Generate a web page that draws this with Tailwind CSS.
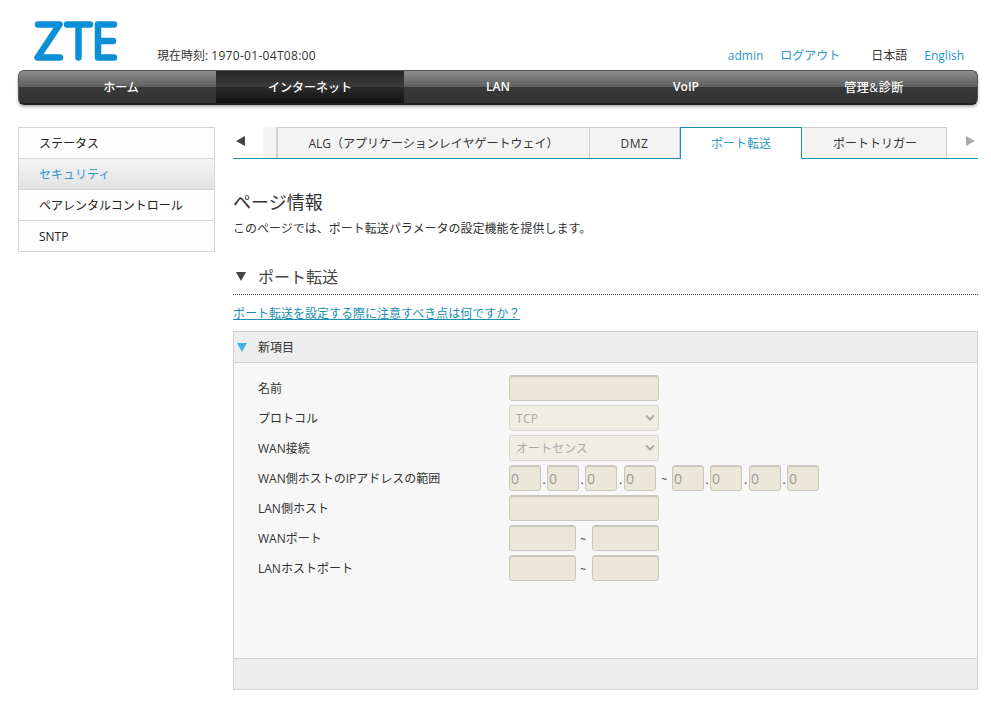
<!DOCTYPE html>
<html lang="ja">
<head>
    <meta charset="UTF-8">
    <title>ZTE</title>
    <script src="https://cdn.jsdelivr.net/npm/@tailwindcss/browser@4"></script>
</head>
<body class="bg-white text-[#333] text-[12px] font-['Open_Sans','Noto_Sans_CJK_JP',sans-serif]">
<div class="w-[991px] h-[706px] overflow-hidden pl-[18px] pr-[13px]">

    <!-- header -->
    <header class="relative h-[70px] flex items-end">
        <svg class="absolute left-[16px] top-[20px]" width="86" height="42" viewBox="0 0 86 42" fill="none" stroke="#0b8fd6" stroke-width="6.5" stroke-linecap="round" stroke-linejoin="round">
            <path d="M4 4.5H25.5L3.5 37.5H26"/>
            <path d="M33 4.5H56M44.5 4.5V37.5"/>
            <path d="M80 4.5H64V37.5H80M64 21H79"/>
        </svg>
        <span class="ml-[139px] mb-[5px] leading-[18px]">現在時刻: <span class="tracking-[0.3px]">1970-01-04T08:00</span></span>
        <div class="ml-auto mr-[14px] mb-[5px] flex leading-[18px]">
            <a class="text-[#2d97c4]">admin</a>
            <a class="ml-[17px] text-[#2d97c4]">ログアウト</a>
            <span class="ml-[31px]">日本語</span>
            <a class="ml-[17px] text-[#1d96cf]">English</a>
        </div>
    </header>

    <!-- main nav -->
    <nav class="w-[960px] h-[35px] px-[9px] flex rounded-[6px] border border-[#555] border-b-2 border-b-[#222] shadow-[0_2px_3px_rgba(0,0,0,0.3)] bg-[linear-gradient(#8c8c8c,#5f5f5f_50%,#383838_50%,#333)] text-white text-[12px] overflow-hidden">
        <a class="w-[188px] pt-[2px] pr-[2px] flex items-center justify-center font-medium">ホーム</a>
        <a class="w-[188px] pt-[2px] flex items-center justify-center font-medium bg-[linear-gradient(#242424,#3c3c3c_50%,#2c2c2c_50%,#111)]">インターネット</a>
        <a class="w-[188px] flex items-center justify-center font-semibold">LAN</a>
        <a class="w-[188px] flex items-center justify-center font-semibold">VoIP</a>
        <a class="w-[188px] pt-[2px] flex items-center justify-center font-medium tracking-[0.6px]">管理&amp;診断</a>
    </nav>

    <div class="flex mt-[22px]">
        <!-- side menu -->
        <ul class="w-[197px] h-[125px] border border-[#d4d4d4] shrink-0">
            <li class="h-[31px] pl-[20px] pt-[2px] flex items-center text-[#222] bg-[#fdfdfd] border-b border-[#d4d4d4]">ステータス</li>
            <li class="h-[31px] pl-[20px] pt-[2px] flex items-center text-[#2d97c4] bg-[linear-gradient(#f4f4f4,#e2e2e2)] border-b border-[#d4d4d4]">セキュリティ</li>
            <li class="h-[31px] pl-[20px] pt-[2px] flex items-center text-[#222] bg-[#fdfdfd] border-b border-[#d4d4d4]">ペアレンタルコントロール</li>
            <li class="h-[30px] pl-[20px] pt-[2px] flex items-center text-[#222] bg-[#fdfdfd]">SNTP</li>
        </ul>

        <main class="ml-[18px] w-[745px]">
            <!-- tabs -->
            <div class="flex h-[32px] border-b border-[#1c8fb0]">
                <div class="w-[43px] flex">
                    <div class="w-[30px] bg-white flex items-center pl-[3px] pb-[3px]">
                        <span class="w-0 h-0 border-y-[5px] border-y-transparent border-r-[9px] border-r-[#444]"></span>
                    </div>
                    <div class="w-[13px] bg-[#f3f3f3]"></div>
                </div>
                <div class="w-[314px] pt-[2px] flex items-center justify-center bg-[#f3f3f3] border-t border-x border-[#d0d0d0] border-l-2">ALG（アプリケーションレイヤゲートウェイ）</div>
                <div class="w-[90px] pt-[2px] flex items-center justify-center tracking-[0.6px] bg-[#f3f3f3] border-t border-r border-[#d0d0d0]">DMZ</div>
                <div class="w-[122px] h-[32px] flex items-center justify-center bg-white text-[#2d97c4] border-t border-x border-[#1c8fb0]">ポート転送</div>
                <div class="w-[145px] pt-[2px] pl-[2px] flex items-center justify-center bg-[#f3f3f3] border-t border-r border-[#d0d0d0]">ポートトリガー</div>
                <div class="w-[31px] flex items-center justify-end pr-[3px] pb-[3px]">
                    <span class="w-0 h-0 border-y-[5px] border-y-transparent border-l-[9px] border-l-[#aaa]"></span>
                </div>
            </div>

            <h1 class="mt-[31px] text-[18px] leading-[24px] text-[#333]">ページ情報</h1>
            <p class="mt-[6px] text-[12px] leading-[18px] text-[#333]">このページでは、ポート転送パラメータの設定機能を提供します。</p>

            <div class="mt-[21px] h-[36px] flex items-center border-b border-dotted border-[#333]">
                <span class="ml-[3px] w-0 h-0 border-x-[5px] border-x-transparent border-t-[9px] border-t-[#444]"></span>
                <h2 class="ml-[12px] text-[16px] text-[#444]">ポート転送</h2>
            </div>

            <a class="block mt-[10px] h-[18px] leading-[17px] text-[#1c8fb0] underline w-[288px]">ポート転送を設定する際に注意すべき点は何ですか？</a>

            <!-- form panel -->
            <section class="mt-[8px] h-[359px] border border-[#d2d2d2] bg-[#f7f7f7] flex flex-col">
                <div class="h-[31px] shrink-0 flex items-center bg-[#ededed] border-b border-[#d2d2d2]">
                    <span class="ml-[3px] w-0 h-0 border-x-[5px] border-x-transparent border-t-[9px] border-t-[#3fb2e0]"></span>
                    <span class="ml-[11px] pt-[2px]">新項目</span>
                </div>

                <div class="flex-1 pt-[12px] pl-[24px] flex flex-col gap-[4px] text-[12px]">
                    <div class="h-[26px] flex items-center">
                        <label class="w-[251px] pt-[2px]">名前</label>
                        <input disabled class="w-[150px] h-[26px] rounded-[3px] border border-[#c8c8c0] shadow-[inset_0_1px_1px_rgba(0,0,0,0.15)] bg-[#ebe8da]">
                    </div>
                    <div class="h-[26px] flex items-center">
                        <label class="w-[251px] pt-[2px]">プロトコル</label>
                        <div class="relative w-[150px] h-[26px] rounded-[3px] border border-[#d5d5cd] bg-[#f0eee3] text-[#aaa] flex items-center pl-[6px] pt-[2px] tracking-[0.3px]">TCP
                            <svg class="absolute right-[3px] top-[8px]" width="10" height="8" viewBox="0 0 10 8" fill="none" stroke="#aaa" stroke-width="2"><path d="M1 1.5L5 5.5L9 1.5"/></svg>
                        </div>
                    </div>
                    <div class="h-[26px] flex items-center">
                        <label class="w-[251px] pt-[2px]">WAN接続</label>
                        <div class="relative w-[150px] h-[26px] rounded-[3px] border border-[#d5d5cd] bg-[#f0eee3] text-[#aaa] flex items-center pl-[6px] pt-[2px]">オートセンス
                            <svg class="absolute right-[3px] top-[8px]" width="10" height="8" viewBox="0 0 10 8" fill="none" stroke="#aaa" stroke-width="2"><path d="M1 1.5L5 5.5L9 1.5"/></svg>
                        </div>
                    </div>
                    <div class="h-[26px] flex items-center">
                        <label class="w-[251px] pt-[2px]">WAN側ホストのIPアドレスの範囲</label>
                        <input disabled value="0" class="w-[32px] h-[26px] pl-[1px] text-[14px] rounded-[3px] border border-[#c8c8c0] shadow-[inset_0_1px_1px_rgba(0,0,0,0.15)] bg-[#ebe8da] text-[#999]">
                        <span class="w-[6px] pt-[4px] text-center">.</span>
                        <input disabled value="0" class="w-[32px] h-[26px] pl-[1px] text-[14px] rounded-[3px] border border-[#c8c8c0] shadow-[inset_0_1px_1px_rgba(0,0,0,0.15)] bg-[#ebe8da] text-[#999]">
                        <span class="w-[6px] pt-[4px] text-center">.</span>
                        <input disabled value="0" class="w-[32px] h-[26px] pl-[1px] text-[14px] rounded-[3px] border border-[#c8c8c0] shadow-[inset_0_1px_1px_rgba(0,0,0,0.15)] bg-[#ebe8da] text-[#999]">
                        <span class="w-[7px] pt-[4px] text-center">.</span>
                        <input disabled value="0" class="w-[32px] h-[26px] pl-[1px] text-[14px] rounded-[3px] border border-[#c8c8c0] shadow-[inset_0_1px_1px_rgba(0,0,0,0.15)] bg-[#ebe8da] text-[#999]">
                        <span class="w-[16px] pt-[2px] text-center text-[10px]">~</span>
                        <input disabled value="0" class="w-[32px] h-[26px] pl-[1px] text-[14px] rounded-[3px] border border-[#c8c8c0] shadow-[inset_0_1px_1px_rgba(0,0,0,0.15)] bg-[#ebe8da] text-[#999]">
                        <span class="w-[6px] pt-[4px] text-center">.</span>
                        <input disabled value="0" class="w-[32px] h-[26px] pl-[1px] text-[14px] rounded-[3px] border border-[#c8c8c0] shadow-[inset_0_1px_1px_rgba(0,0,0,0.15)] bg-[#ebe8da] text-[#999]">
                        <span class="w-[7px] pt-[4px] text-center">.</span>
                        <input disabled value="0" class="w-[32px] h-[26px] pl-[1px] text-[14px] rounded-[3px] border border-[#c8c8c0] shadow-[inset_0_1px_1px_rgba(0,0,0,0.15)] bg-[#ebe8da] text-[#999]">
                        <span class="w-[6px] pt-[4px] text-center">.</span>
                        <input disabled value="0" class="w-[32px] h-[26px] pl-[1px] text-[14px] rounded-[3px] border border-[#c8c8c0] shadow-[inset_0_1px_1px_rgba(0,0,0,0.15)] bg-[#ebe8da] text-[#999]">
                    </div>
                    <div class="h-[26px] flex items-center">
                        <label class="w-[251px] pt-[2px]">LAN側ホスト</label>
                        <input disabled class="w-[150px] h-[26px] rounded-[3px] border border-[#c8c8c0] shadow-[inset_0_1px_1px_rgba(0,0,0,0.15)] bg-[#ebe8da]">
                    </div>
                    <div class="h-[26px] flex items-center">
                        <label class="w-[251px] pt-[2px]">WANポート</label>
                        <input disabled class="w-[67px] h-[26px] rounded-[3px] border border-[#c8c8c0] shadow-[inset_0_1px_1px_rgba(0,0,0,0.15)] bg-[#ebe8da]">
                        <span class="w-[16px] pt-[2px] pr-[2px] text-center text-[10px]">~</span>
                        <input disabled class="w-[67px] h-[26px] rounded-[3px] border border-[#c8c8c0] shadow-[inset_0_1px_1px_rgba(0,0,0,0.15)] bg-[#ebe8da]">
                    </div>
                    <div class="h-[26px] flex items-center">
                        <label class="w-[251px] pt-[2px]">LANホストポート</label>
                        <input disabled class="w-[67px] h-[26px] rounded-[3px] border border-[#c8c8c0] shadow-[inset_0_1px_1px_rgba(0,0,0,0.15)] bg-[#ebe8da]">
                        <span class="w-[16px] pt-[2px] pr-[2px] text-center text-[10px]">~</span>
                        <input disabled class="w-[67px] h-[26px] rounded-[3px] border border-[#c8c8c0] shadow-[inset_0_1px_1px_rgba(0,0,0,0.15)] bg-[#ebe8da]">
                    </div>
                </div>

                <div class="h-[31px] shrink-0 bg-[#ededed] border-t border-[#d2d2d2]"></div>
            </section>
        </main>
    </div>
</div>
</body>
</html>
